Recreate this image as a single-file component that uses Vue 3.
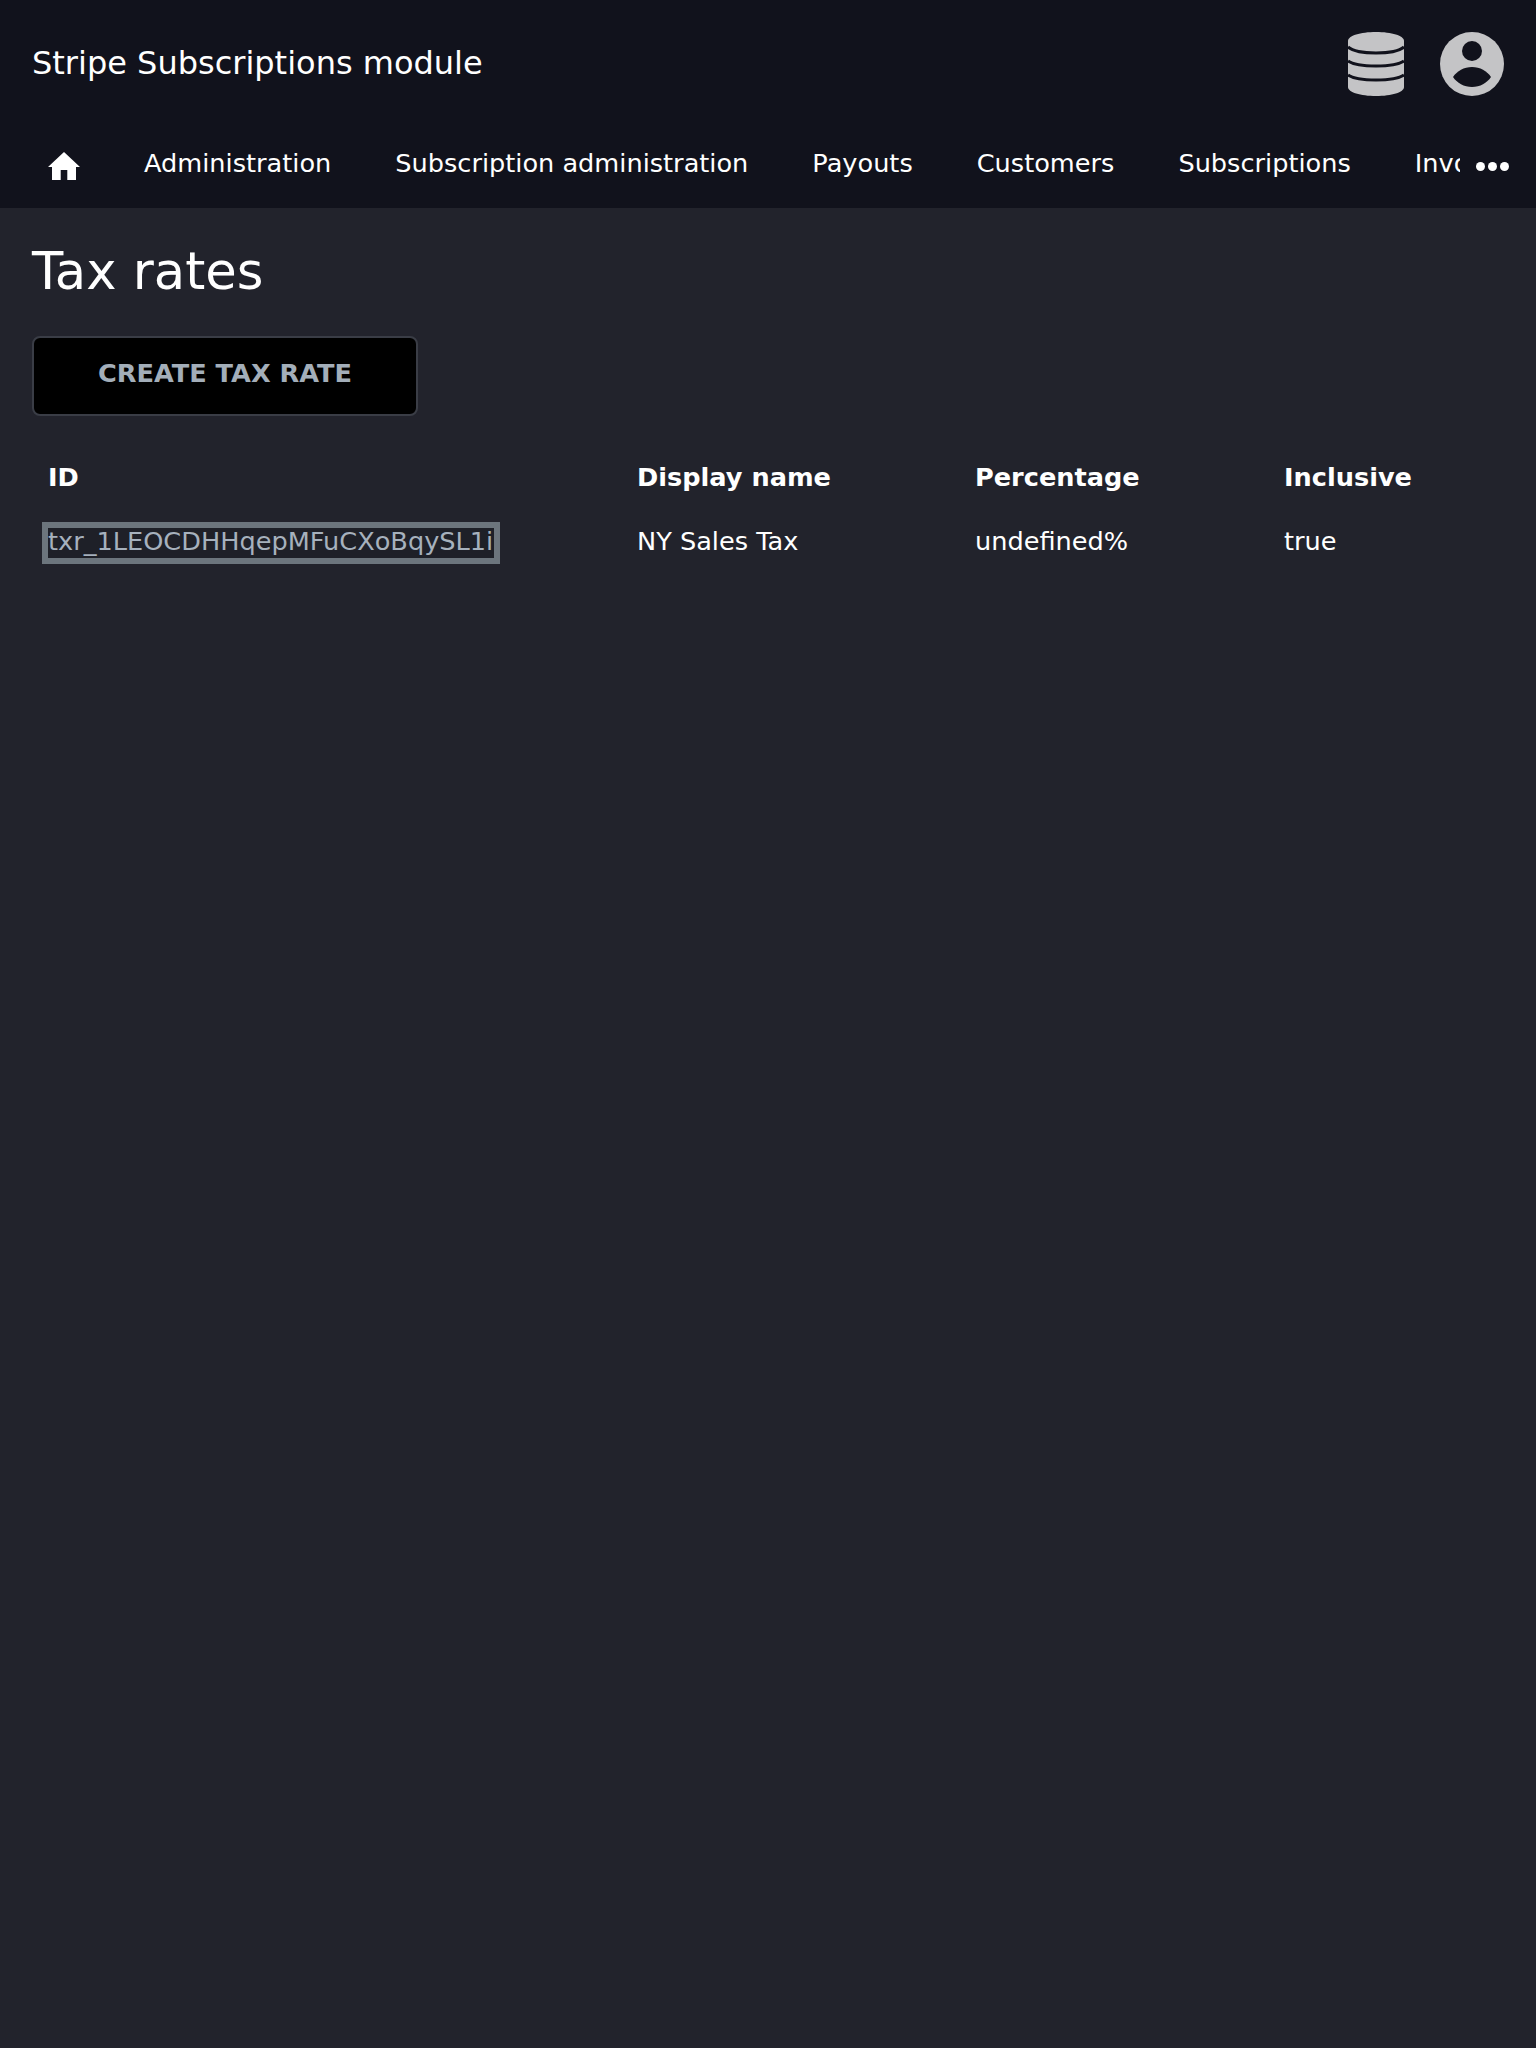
<script setup>
const navItems = [
  "Administration",
  "Subscription administration",
  "Payouts",
  "Customers",
  "Subscriptions",
  "Invoices",
];

const columns = ["ID", "Display name", "Percentage", "Inclusive"];

const taxRates = [
  {
    id: "txr_1LEOCDHHqepMFuCXoBqySL1i",
    displayName: "NY Sales Tax",
    percentage: "undefined%",
    inclusive: "true",
  },
];
</script>

<template>
  <div class="page">
    <header class="topbar">
      <span class="brand">Stripe Subscriptions module</span>
      <div class="topbar-icons">
        <svg class="db-icon" viewBox="0 0 56 64" aria-hidden="true">
          <path
            fill="#c4c4c6"
            d="M0 9C0 3.500 12.500 0 28 0s28 3.500 28 9v46c0 5.500-12.500 9-28 9S0 60.500 0 55z"
          />
          <g fill="none" stroke="#11121c" stroke-width="3">
            <path d="M0 15c4 3.500 14 6 28 6s24-2.500 28-6" />
            <path d="M0 29c4 3 14 5 28 5s24-2 28-5" />
            <path d="M0 43c4 3 14 5 28 5s24-2 28-5" />
          </g>
        </svg>
        <svg class="user-icon" viewBox="0 0 64 64" aria-hidden="true">
          <circle cx="32" cy="32" r="32" fill="#c4c4c6" />
          <circle cx="32" cy="19" r="10" fill="#11121c" />
          <path fill="#11121c" d="M13 45c4-6 11-10 19-10s15 4 19 10c-4 6-11 10-19 10s-15-4-19-10z" />
        </svg>
      </div>
    </header>

    <nav class="navbar">
      <div class="nav-scroll">
        <a class="nav-item nav-home">
          <svg class="home-icon" viewBox="0 0 32 28" aria-hidden="true">
            <path fill="#fff" d="M16 0 32 15h-4v13H19.300V18h-6.600v10H4V15H0z" />
          </svg>
        </a>
        <a v-for="item in navItems" :key="item" class="nav-item">{{ item }}</a>
      </div>
      <div class="nav-more"><i></i><i></i><i></i></div>
    </nav>

    <main class="content">
      <h1 class="title">Tax rates</h1>
      <button type="button" class="create-btn">CREATE TAX RATE</button>
      <table class="rates">
        <thead>
          <tr>
            <th v-for="col in columns" :key="col">{{ col }}</th>
          </tr>
        </thead>
        <tbody>
          <tr v-for="rate in taxRates" :key="rate.id">
            <td><a class="rate-link">{{ rate.id }}</a></td>
            <td>{{ rate.displayName }}</td>
            <td>{{ rate.percentage }}</td>
            <td>{{ rate.inclusive }}</td>
          </tr>
        </tbody>
      </table>
    </main>
  </div>
</template>

<style>
html,
body {
  margin: 0;
  background: #22232c;
}
</style>

<style scoped>
.page {
  min-height: 2048px;
  background: #22232c;
  color: #fff;
  font-family: "DejaVu Sans", sans-serif;
}

.topbar {
  height: 128px;
  padding: 0 32px 2px;
  box-sizing: border-box;
  display: flex;
  align-items: center;
  justify-content: space-between;
  background: #11121c;
}

.brand {
  font-size: 32px;
  line-height: 40px;
}

.topbar-icons {
  display: flex;
  align-items: center;
  gap: 36px;
  margin-top: 2px;
}

.db-icon {
  width: 56px;
  height: 64px;
  display: block;
}

.user-icon {
  width: 64px;
  height: 64px;
  display: block;
}

.navbar {
  position: relative;
  height: 80px;
  background: #11121c;
}

.nav-scroll {
  width: 1460px;
  height: 80px;
  display: flex;
  overflow: hidden;
  padding-left: 16px;
  box-sizing: border-box;
}

.nav-item {
  flex: none;
  padding: 0 32px;
  font-size: 25.6px;
  line-height: 70px;
  color: #fff;
  white-space: nowrap;
}

.nav-home {
  display: flex;
  padding-top: 24px;
  box-sizing: border-box;
  height: 80px;
}

.home-icon {
  width: 32px;
  height: 28px;
  display: block;
}

.nav-more {
  position: absolute;
  left: 1476px;
  top: 34px;
  display: flex;
  gap: 3px;
}

.nav-more i {
  width: 9px;
  height: 9px;
  border-radius: 50%;
  background: #fff;
}

.content {
  padding: 0 32px;
}

.title {
  margin: 0;
  padding-top: 33px;
  font-size: 51.2px;
  line-height: 60px;
  font-weight: 400;
}

.create-btn {
  display: block;
  margin-top: 35px;
  width: 386px;
  height: 80px;
  padding: 0 0 7px;
  background: #000;
  border: 2px solid #3a3d46;
  border-radius: 8px;
  color: #a3aeb9;
  font-family: inherit;
  font-size: 25.6px;
  font-weight: 700;
}

.rates {
  margin-top: 29px;
  border-collapse: collapse;
  table-layout: fixed;
  width: 1472px;
  font-size: 25.6px;
}

.rates th,
.rates td {
  padding: 16px;
  text-align: left;
  line-height: 32px;
}

.rates th:nth-child(1) {
  width: 557px;
}

.rates th:nth-child(2) {
  width: 306px;
}

.rates th:nth-child(3) {
  width: 277px;
}

.rate-link {
  display: inline-block;
  height: 30px;
  margin-bottom: -4px;
  padding-right: 1px;
  line-height: 26px;
  color: #a6b1bd;
  background: #1e2028;
  outline: 6.4px solid #6c757d;
  white-space: nowrap;
}
</style>
